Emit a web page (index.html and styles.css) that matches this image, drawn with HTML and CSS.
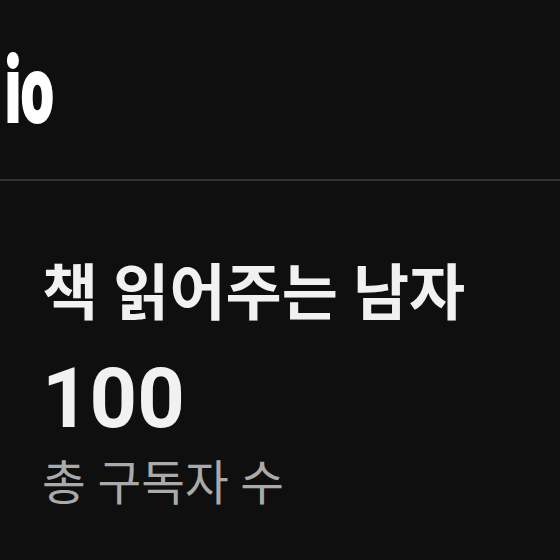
FILE: index.html
```html
<!DOCTYPE html>
<html lang="ko">
<head>
    <meta charset="UTF-8">
    <meta name="viewport" content="width=device-width, initial-scale=1.0">
    <title>Studio</title>
    <link rel="stylesheet" href="styles.css">
</head>
<body>
    <header class="topbar">
        <span class="logo">io</span>
    </header>
    <div class="container">
        <section class="channel">
            <h1 class="channel-name">책 읽어주는 남자</h1>
            <p class="sub-count">100</p>
            <p class="sub-label">총 구독자 수</p>
        </section>
    </div>
</body>
</html>
```
FILE: styles.css
```css
body {
    font-family: 'Roboto', 'Noto Sans CJK KR', sans-serif;
    margin: 0;
    padding: 0;
    background-color: #0f0f0f;
    color: #f1f1f1;
    overflow: hidden;
}
.topbar {
    height: 134px;
    padding: 45px 0 0 5px;
    border-bottom: 2px solid #333;
    overflow: hidden;
}
.logo {
    display: inline-block;
    font-family: 'Roboto', sans-serif;
    font-weight: 900;
    font-size: 92px;
    line-height: 1;
    color: #fff;
    -webkit-text-stroke: 2px #fff;
    transform: scaleX(0.63);
    transform-origin: left center;
}
.container {
    padding: 77px 42px 0;
}
.channel-name {
    margin: 0;
    font-family: 'Roboto', 'Noto Sans CJK KR', sans-serif;
    font-size: 61px;
    font-weight: 700;
    line-height: 1.2;
}
.sub-count {
    margin: 18px 0 0;
    font-size: 83px;
    font-weight: 700;
    line-height: 1.2;
}
.sub-label {
    margin: 7px 0 0;
    font-family: 'Roboto', 'Noto Sans CJK KR', sans-serif;
    font-size: 47.5px;
    color: #aaa;
    line-height: 1.2;
}
```
